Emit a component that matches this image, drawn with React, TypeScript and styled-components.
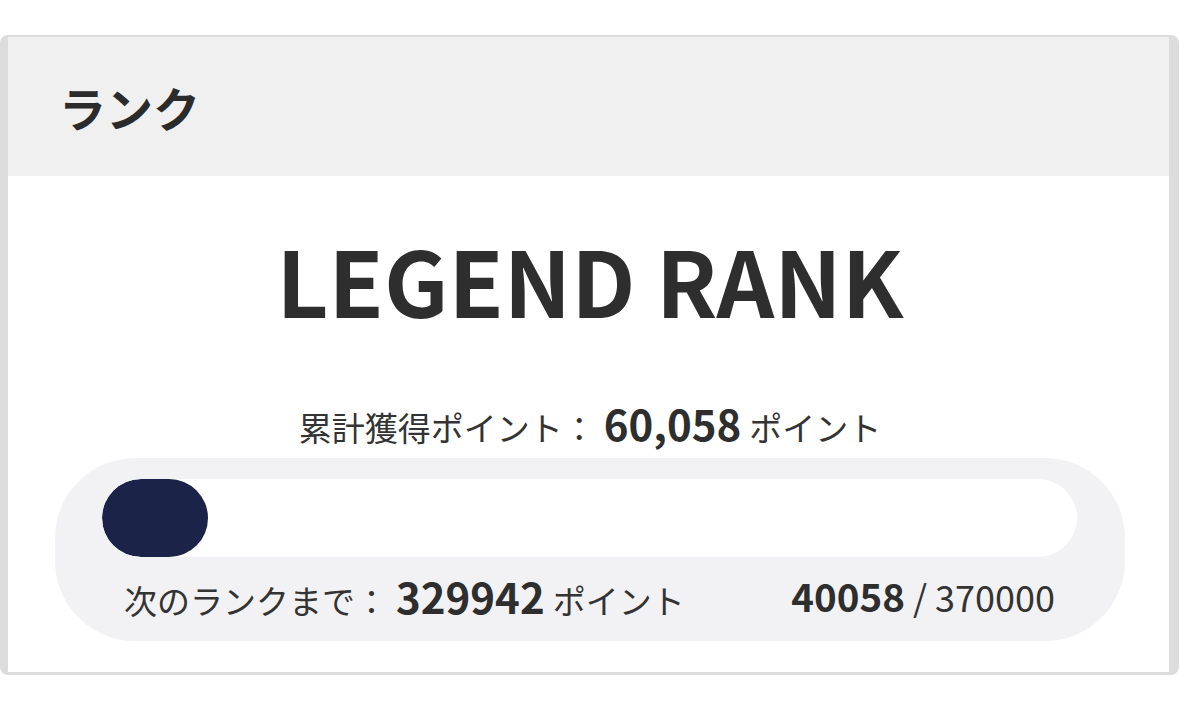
import styled, { createGlobalStyle } from "styled-components";

const GlobalStyle = createGlobalStyle`
  body {
    margin: 0;
    background: #ffffff;
    font-family: "Noto Sans CJK JP", "Noto Sans", sans-serif;
    color: #333333;
  }
`;

const Card = styled.section`
  box-sizing: border-box;
  width: 1179px;
  margin-top: 35px;
  border: 2px solid #dcdcdc;
  border-left-width: 8px;
  border-right-width: 10px;
  border-bottom-width: 3px;
  border-radius: 8px;
  overflow: hidden;
  background: #ffffff;
`;

const Header = styled.header`
  display: flex;
  align-items: center;
  height: 139px;
  padding-left: 51px;
  background: #f1f0f0;
  font-size: 47px;
  font-weight: 700;
  color: #2b2b2b;
`;

const Body = styled.div`
  display: flex;
  flex-direction: column;
  align-items: center;
  padding: 58px 44px 31px 47px;
`;

const RankName = styled.h1`
  margin: 0;
  font-size: 90px;
  line-height: 1;
  font-weight: 700;
  color: #2e2e2e;
`;

const Total = styled.p`
  margin: 75px 0 0;
  font-size: 33px;
  line-height: 48px;
  color: #333333;
`;

const Num = styled.strong<{ size?: number; gap?: number }>`
  font-size: ${(p) => p.size ?? 42}px;
  font-weight: 700;
  color: #2e2e2e;
  margin: 0 ${(p) => p.gap ?? 8}px;
`;

const ProgressBox = styled.div`
  align-self: stretch;
  margin-top: 7px;
  padding: 21px 48px 0 47px;
  background: #f2f2f4;
  border-radius: 80px;
`;

const Track = styled.div`
  height: 78px;
  border-radius: 39px;
  background: #ffffff;
  overflow: hidden;
`;

const Fill = styled.div`
  height: 100%;
  border-radius: 39px;
  background: #1b2448;
`;

const Labels = styled.div`
  display: flex;
  align-items: center;
  justify-content: space-between;
  box-sizing: border-box;
  height: 84px;
  padding: 0 22px 8px;
  font-size: 33px;
  color: #333333;
`;

const Ratio = styled.span`
  font-size: 36px;
  color: #333333;
`;

export default function App() {
  const current = 40058;
  const goal = 370000;
  const pct = (current / goal) * 100;
  return (
    <Card>
      <GlobalStyle />
      <Header>ランク</Header>
      <Body>
        <RankName>LEGEND RANK</RankName>
        <Total>
          累計獲得ポイント：<Num>60,058</Num>ポイント
        </Total>
        <ProgressBox>
          <Track>
            <Fill style={{ width: `${pct}%` }} />
          </Track>
          <Labels>
            <span>
              次のランクまで：<Num>329942</Num>ポイント
            </span>
            <Ratio>
              <Num size={38.5} gap={0}>
                {current}
              </Num>{" "}
              / {goal}
            </Ratio>
          </Labels>
        </ProgressBox>
      </Body>
    </Card>
  );
}
